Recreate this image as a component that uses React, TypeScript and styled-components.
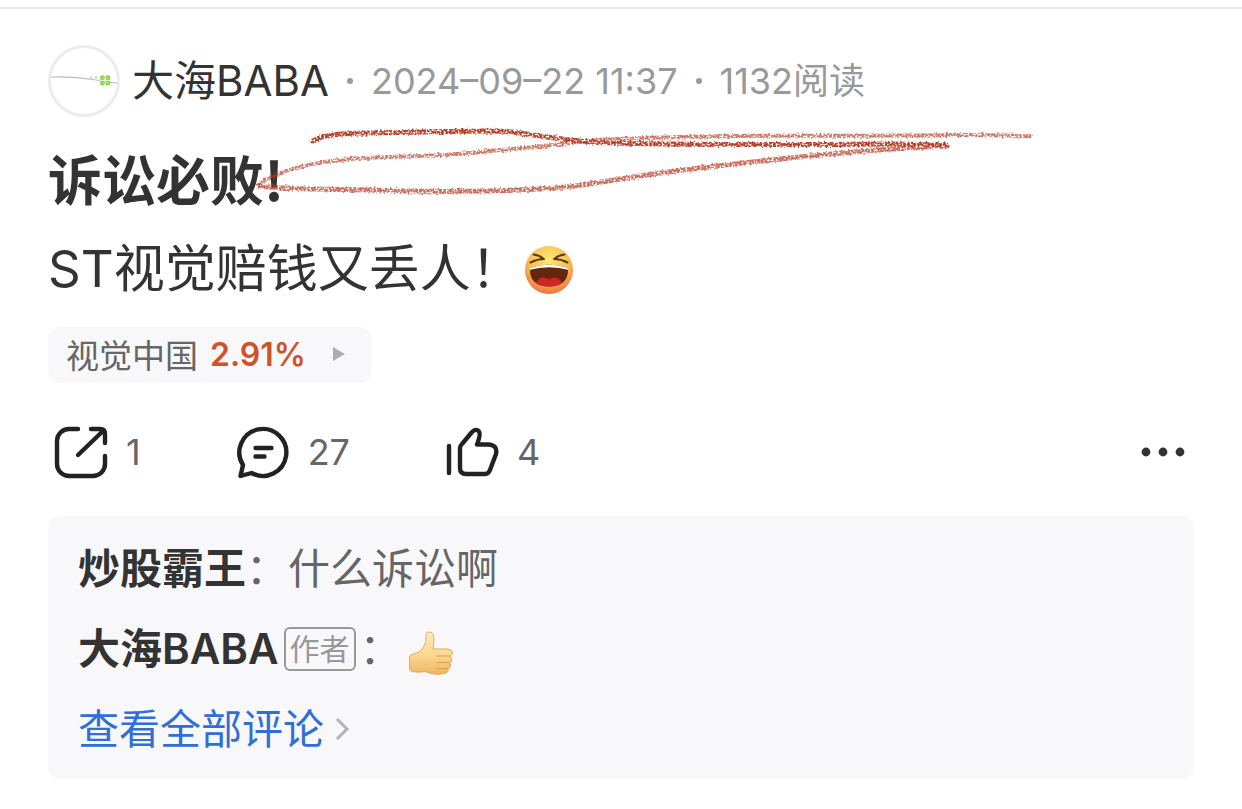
import React from 'react';
import styled, { createGlobalStyle } from 'styled-components';

const GlobalStyle = createGlobalStyle`
  * { box-sizing: border-box; }
  body {
    margin: 0;
    background: #fff;
    color: #333;
    font-family: Inter, "Noto Sans CJK SC", sans-serif;
  }
  button {
    border: 0;
    padding: 0;
    background: none;
    font: inherit;
    color: inherit;
    cursor: pointer;
  }
`;

const Page = styled.main`
  position: relative;
  padding-top: 7px;
`;

const Post = styled.article`
  border-top: 2px solid #e8e8e8;
  padding: 36px 48px 30px;
`;

const Header = styled.header`
  display: flex;
  align-items: center;
  height: 72px;
`;

const Avatar = styled.svg`
  width: 72px;
  height: 72px;
  margin-right: 12px;
`;

const Author = styled.span`
  font-size: 42px;
  line-height: 60px;
`;

const Meta = styled.span`
  font-size: 36px;
  line-height: 60px;
  color: #999;
`;

const Dot = styled.span`
  width: 6px;
  height: 6px;
  margin: 0 18px;
  border-radius: 50%;
  background: #999;
`;

const Title = styled.h1`
  margin: 31px 0 0;
  font-family: "Noto Sans CJK SC", sans-serif;
  font-size: 54px;
  line-height: 60px;
  font-weight: 600;
`;

const Body = styled.p`
  display: flex;
  align-items: center;
  gap: 2px;
  margin: 31px 0 0;
  font-size: 51px;
  line-height: 60px;
`;

const Emoji = styled.svg<{ $size: number }>`
  flex: none;
  width: ${(p) => p.$size}px;
  height: ${(p) => p.$size}px;
`;

const Stock = styled.button`
  display: flex;
  align-items: center;
  height: 56px;
  margin-top: 28px;
  padding: 0 26px 2px 18px;
  border-radius: 12px;
  background: #f8f8fb;
  font-size: 33px;
  color: #666;
`;

const Change = styled.span`
  margin: 0 26px 0 12px;
  font-size: 32px;
  font-weight: 600;
  color: #d0522b;
`;

const Actions = styled.div`
  display: flex;
  align-items: center;
  gap: 95px;
  margin-top: 42px;
  padding: 0 8px 0 6px;
`;

const Action = styled.button`
  display: flex;
  align-items: center;
  gap: 18px;
  font-size: 36px;
  line-height: 54px;
  color: #666;
`;

const ActionIcon = styled.svg`
  width: 54px;
  height: 54px;
  fill: none;
  stroke: #222;
  stroke-width: 4.4;
  stroke-linecap: round;
  stroke-linejoin: round;
`;

const More = styled.button`
  display: flex;
  margin-left: auto;
`;

const Comments = styled.section`
  display: flex;
  flex-direction: column;
  align-items: flex-start;
  gap: 20px;
  margin-top: 37px;
  padding: 23px 30px 20px;
  border-radius: 12px;
  background: #f8f8fb;
`;

const Comment = styled.p`
  display: flex;
  align-items: center;
  margin: 0;
  font-size: 42px;
  line-height: 60px;
  color: #666;
`;

const Name = styled.b`
  font-weight: 600;
  color: #333;
`;

const Badge = styled.span`
  height: 44px;
  margin: 0 4px 0 5px;
  padding: 0 4px;
  border: 2px solid #999;
  border-radius: 6px;
  font-size: 30px;
  line-height: 40px;
  color: #999;
`;

const Reaction = styled.span`
  display: flex;
  padding: 8px 0 0 6px;
`;

const AllLink = styled.a`
  display: flex;
  align-items: center;
  gap: 10px;
  font-size: 41px;
  line-height: 60px;
  color: #2f6fd6;
  text-decoration: none;
`;

const Scribble = styled.svg`
  position: absolute;
  top: 120px;
  left: 240px;
  width: 800px;
  height: 80px;
  pointer-events: none;
`;

const Clover = () => (
  <g>
    <g fill="#8fcf4c">
      <circle cx="54.500" cy="32.800" r="2.500" />
      <circle cx="59.800" cy="32.800" r="2.500" />
      <circle cx="54.500" cy="38" r="2.500" />
      <circle cx="59.800" cy="38" r="2.500" />
    </g>
    <path
      d="M57.200 30v11M51.500 35.400h11.500M54 32.200l1.500 1.500M60.300 32.200l-1.500 1.500M54 38.600l1.500-1.500M60.300 38.600l-1.500-1.500"
      stroke="#e4f5d0"
      strokeWidth="1"
    />
  </g>
);

const LaughIcon = () => (
  <Emoji $size={50} viewBox="0 0 50 50" role="img" aria-label="大笑">
    <defs>
      <radialGradient id="face" cx="50%" cy="30%" r="70%">
        <stop offset="0" stopColor="#fde878" />
        <stop offset="0.6" stopColor="#f8bd52" />
        <stop offset="1" stopColor="#ec7440" />
      </radialGradient>
      <clipPath id="mouth">
        <path d="M6 24Q25 17 44 24Q45 42 25 42.500Q5 42 6 24Z" />
      </clipPath>
    </defs>
    <circle cx="25" cy="26" r="24" fill="url(#face)" />
    <g fill="none" stroke="#5a3a0c" strokeWidth="2" strokeLinecap="round" strokeLinejoin="round">
      <path d="M9.500 10.500Q15 11 20 15Q13 15 6.500 18.500" />
      <path d="M40.500 10.500Q35 11 30 15Q37 15 43.500 18.500" />
    </g>
    <g clipPath="url(#mouth)">
      <rect width="50" height="50" fill="#64260d" />
      <path d="M5 18H45V26Q25 20.500 5 26Z" fill="#fff" />
      <path d="M12 42Q12 34 19 33.500Q23 33.500 25 35.500Q27 33.500 31 33.500Q38 34 38 42V46H12Z" fill="#d02625" />
    </g>
  </Emoji>
);

const ThumbEmoji = () => (
  <Emoji $size={46} viewBox="0 0 46 46" role="img" aria-label="赞">
    <defs>
      <linearGradient id="skin" x1="0" y1="0" x2="0" y2="1">
        <stop offset="0" stopColor="#fdebb8" />
        <stop offset="0.6" stopColor="#fad58c" />
        <stop offset="1" stopColor="#f0b263" />
      </linearGradient>
    </defs>
    <path
      d="M18 4Q19 1.500 22 2Q26 3 26 10L25 19H40Q45 20 44.500 23Q44 25.500 42 26Q45 28 43.500 31Q43 32.500 41.500 32.500Q43.500 35 42 37Q41.500 38.500 40 38.500Q41 42 38 43Q31 45.500 23 43.500L17 41.500Q10 43 4 41.500Q1.500 41 1.500 38V27Q2 24.500 5 24Q12 23 15 18Q19 12 18 4Z"
      fill="url(#skin)"
      stroke="#e5aa5c"
      strokeWidth="1"
    />
    <path d="M28 26H42M29 32.500H41.500M29 38.500H40" stroke="#d99a4e" strokeWidth="1.200" fill="none" />
  </Emoji>
);

export default function App() {
  return (
    <Page lang="zh-CN">
      <GlobalStyle />
      <Post>
        <Header>
          <Avatar viewBox="0 0 72 72" aria-hidden="true">
            <circle cx="36" cy="36" r="34.500" fill="#fff" stroke="#ececec" strokeWidth="3" />
            <path d="M3 32Q25 31 45 34.500T69 38" fill="none" stroke="#b9bdb9" strokeWidth="1.200" />
            <circle cx="43" cy="32.500" r="1" fill="#b5c9b0" />
            <circle cx="48" cy="32.500" r="1" fill="#a5cf80" />
            <Clover />
          </Avatar>
          <Author>大海BABA</Author>
          <Dot />
          <Meta>2024–09–22 11:37</Meta>
          <Dot />
          <Meta>1132阅读</Meta>
        </Header>

        <Title>诉讼必败!</Title>
        <Body>
          ST视觉赔钱又丢人！
          <LaughIcon />
        </Body>

        <Stock type="button">
          视觉中国
          <Change>2.91%</Change>
          <svg width="14" height="16" viewBox="0 0 14 16" aria-hidden="true">
            <path d="M1 1L13 8L1 15Z" fill="#adadad" />
          </svg>
        </Stock>

        <Actions>
          <Action type="button" aria-label="转发 1">
            <ActionIcon viewBox="0 0 54 54" aria-hidden="true">
              <path d="M24 4H15A12 12 0 0 0 3 16V39A12 12 0 0 0 15 51H39A12 12 0 0 0 51 39V31" />
              <path d="M37 4H46Q51 4 51 9V18M24 30L49 6" />
            </ActionIcon>
            1
          </Action>
          <Action type="button" aria-label="评论 27">
            <ActionIcon viewBox="0 0 54 54" aria-hidden="true">
              <path d="M7 40A23.500 23.500 0 1 1 15.500 48L4.500 51Z" />
              <path d="M19.500 23H35.500M19.500 31.500H28.500" />
            </ActionIcon>
            27
          </Action>
          <Action type="button" aria-label="点赞 4">
            <ActionIcon viewBox="0 0 54 54" aria-hidden="true">
              <path d="M4 21V48M15 43V23Q15 21 17 19L27 7Q31 3 34 6.500Q36 9 32 19.500H43Q53 20 51 29L45 45Q43.500 49 40 49H21Q15 49 15 43Z" />
            </ActionIcon>
            4
          </Action>
          <More type="button" aria-label="更多">
            <svg width="46" height="12" viewBox="0 0 46 12" aria-hidden="true">
              <g fill="#333">
                <circle cx="6" cy="6" r="4.400" />
                <circle cx="23" cy="6" r="4.400" />
                <circle cx="40" cy="6" r="4.400" />
              </g>
            </svg>
          </More>
        </Actions>

        <Comments>
          <Comment>
            <Name>炒股霸王</Name>：什么诉讼啊
          </Comment>
          <Comment>
            <Name>大海BABA</Name>
            <Badge>作者</Badge>
            ：
            <Reaction>
              <ThumbEmoji />
            </Reaction>
          </Comment>
          <AllLink href="#comments">
            查看全部评论
            <svg width="16" height="26" viewBox="0 0 16 26" aria-hidden="true">
              <path d="M3 3L13 13L3 23" fill="none" stroke="#b3b3b3" strokeWidth="3" />
            </svg>
          </AllLink>
        </Comments>
      </Post>

      <Scribble viewBox="240 120 800 80" aria-hidden="true">
        <defs>
          <filter id="crayon" filterUnits="userSpaceOnUse" x="240" y="120" width="800" height="80">
            <feTurbulence type="fractalNoise" baseFrequency="0.5" numOctaves="2" seed="4" result="noise" />
            <feDisplacementMap in="SourceGraphic" in2="noise" scale="4" xChannelSelector="R" yChannelSelector="G" result="rough" />
            <feColorMatrix in="noise" type="matrix" values="0 0 0 0 0  0 0 0 0 0  0 0 0 0 0  0 0 4 0 -1.200" result="grain" />
            <feComposite in="rough" in2="grain" operator="in" />
          </filter>
        </defs>
        <g filter="url(#crayon)" fill="none" stroke="#b53a24" strokeWidth="5" strokeLinecap="round">
          <path d="M313 141C325 133 350 133 400 132.500S480 130 505 131.500S560 141 600 142.500S700 144.500 780 144.500S900 143 947 145" />
          <path opacity="0.75" d="M947 146C900 148 850 152 800 157S680 170 640 176S580 187 530 189.500S440 192 390 190.500S290 190 260 186" />
          <path opacity="0.7" strokeWidth="4" d="M259 184C275 172 310 162 350 159S430 157 470 153S540 147 570 143S640 138 700 136.500S830 136 900 135.500S980 134 1030 136.500" />
        </g>
      </Scribble>
    </Page>
  );
}
